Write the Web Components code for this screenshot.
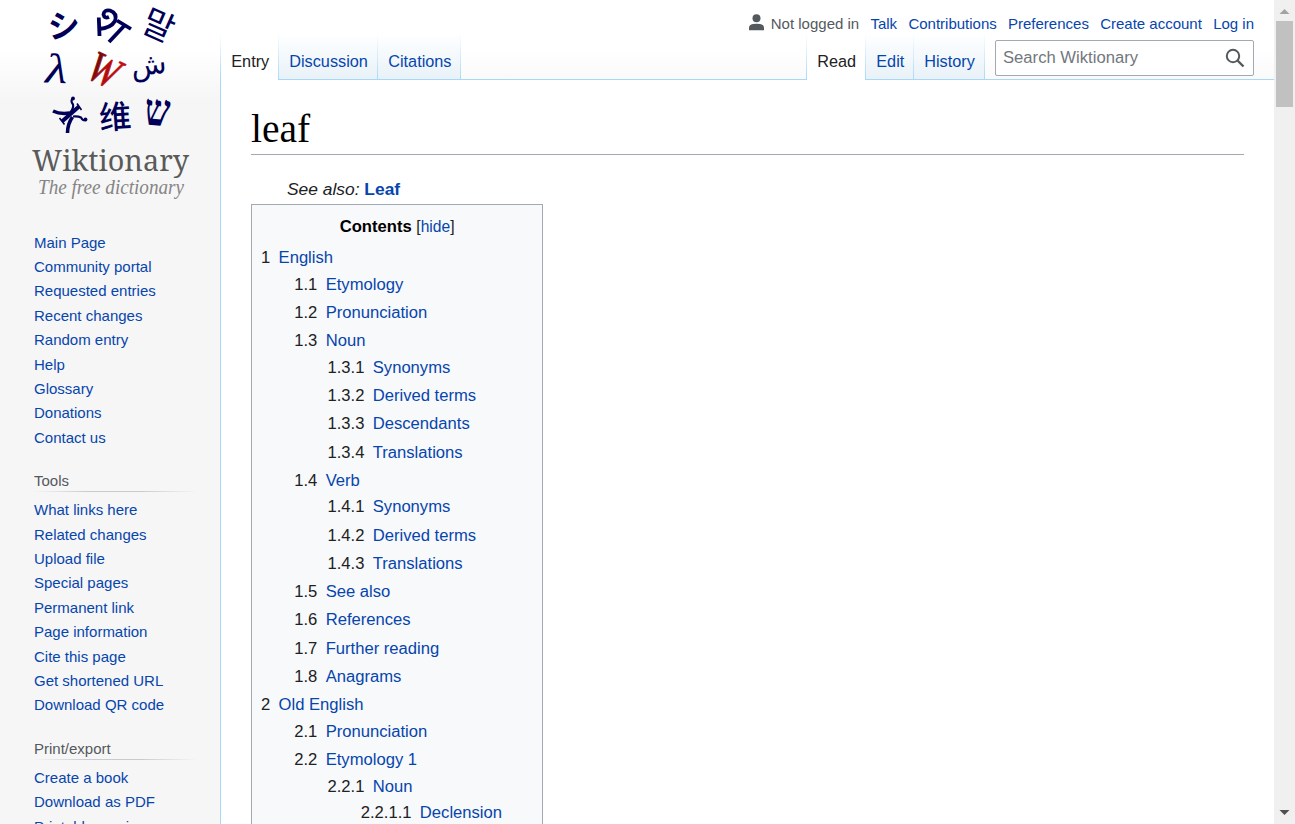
<!DOCTYPE html>
<html lang="en">
<head>
<meta charset="utf-8">
<title>leaf - Wiktionary</title>
<style>
html,body{margin:0;height:100%;overflow:hidden;background:#f6f6f6;font-family:"Liberation Sans",Arial,sans-serif;color:#202122}
</style>
</head>
<body>
<wiki-app></wiki-app>
<script>
function define(name, html, setup) {
  const t = document.createElement('template');
  t.innerHTML = html;
  customElements.define(name, class extends HTMLElement {
    constructor() {
      super();
      this.attachShadow({mode: 'open'}).append(t.content.cloneNode(true));
    }
    connectedCallback() { if (setup) setup(this, this.shadowRoot); }
  });
}

define('wiki-link', `<style>
:host{display:inline}
a{color:#0645ad;text-decoration:none}
</style><a href="#"><slot></slot></a>`);

define('wiki-logo', `<style>
:host{display:block;width:220px;height:200px}
svg{display:block}
.g text{text-anchor:middle}
</style>
<svg width="220" height="200" viewBox="0 0 220 200">
<defs><linearGradient id="red" x1="0" x2="1"><stop offset="0" stop-color="#5a0808"/><stop offset=".5" stop-color="#b00c0c"/><stop offset="1" stop-color="#c01010"/></linearGradient></defs>
<g class="g" fill="#000058">
<text font-family="Noto Sans CJK JP, sans-serif" font-weight="700" font-size="32" transform="translate(64.500 37.500) rotate(-3)">シ</text>
<g fill="none" stroke="#000058" stroke-width="3.800">
<path d="M98.800 17.500L99.500 36M99 29Q111 28 115 21Q117.500 13 110 10.500Q104 9.500 103.500 14.500Q104.500 19 109 17"/>
<path d="M117 20.500L131 29M124.500 25.500L109 42"/>
</g>
<text font-family="Noto Sans CJK KR, sans-serif" font-weight="400" font-size="34" transform="translate(153.500 36.500) rotate(24)">말</text>
<text font-family="Liberation Serif, serif" font-style="italic" font-size="42" transform="translate(56 83) rotate(2) scale(1.2 1)">λ</text>
<text font-family="Liberation Serif, serif" font-style="italic" font-size="38" fill="url(#red)" stroke="url(#red)" stroke-width=".8" transform="translate(98 83) rotate(25) scale(.94 1.15)">W</text>
<text font-family="DejaVu Sans, sans-serif" font-size="29" transform="translate(149.500 74.500) rotate(-6)">ش</text>
<g fill="none" stroke="#000058">
<path d="M53 111Q60 114.500 70 113" stroke-width="3.600"/>
<path d="M79 106.500L62 121.500" stroke-width="4"/>
<path d="M67.500 133Q67.500 124 72.500 117" stroke-width="3.600"/>
<path d="M70 113Q74 108 73 104.500Q70 100.500 73 98.500M73 116.500Q78 116 81 117.500Q83 121.500 86 119.500" stroke-width="2.200"/>
<path d="M77 103.500L81.500 110M59.500 118L64.500 124.500" stroke-width="1.600"/>
</g>
<circle cx="73" cy="98.500" r="1.900"/><circle cx="85.500" cy="119.500" r="1.900"/>
<text font-family="Noto Sans CJK SC, sans-serif" font-weight="500" font-size="32" transform="translate(116 128.500) rotate(-4)">维</text>
<text font-family="Liberation Serif, serif" font-weight="700" font-size="40" transform="translate(156.500 125.500) rotate(4) scale(.9 1.12)">ש</text>
</g>
<text x="32" y="171" font-family="Noto Serif, DejaVu Serif, serif" font-size="29" fill="#5a5a5a" textLength="157" lengthAdjust="spacingAndGlyphs">Wiktionary</text>
<text x="38" y="193.500" font-family="Liberation Serif, serif" font-style="italic" font-size="21" fill="#858585" textLength="146" lengthAdjust="spacingAndGlyphs">The free dictionary</text>
</svg>`);

define('side-portal', `<style>
:host{display:block;margin:0 14px 0 13px;padding:5px 0 3.500px}
h3{margin:0 10px 0 21px;font:400 15px/20px "Liberation Sans",Arial,sans-serif;color:#54595d;height:20px;border-bottom:1px solid;border-image:linear-gradient(to right,rgba(200,204,209,0),#c8ccd1 33%,#c8ccd1 66%,rgba(200,204,209,0)) 1}
ul{list-style:none;margin:0;padding:6.350px 0 0 21px}
li{font-size:15px;line-height:16.875px;padding:3.750px 0}
</style><h3></h3><ul></ul>`, (el, r) => {
  const h = el.getAttribute('heading');
  if (h) r.querySelector('h3').textContent = h; else r.querySelector('h3').remove();
  r.querySelector('ul').innerHTML = el.getAttribute('items').split('|').map(s => `<li><wiki-link>${s}</wiki-link></li>`).join('');
});

define('side-panel', `<style>
:host{display:block;width:220px;overflow:hidden}
.first{padding-top:24.650px}
.rest{margin-top:12.300px}
</style>
<wiki-logo></wiki-logo>
<side-portal class="first" items="Main Page|Community portal|Requested entries|Recent changes|Random entry|Help|Glossary|Donations|Contact us"></side-portal>
<side-portal class="rest" heading="Tools" items="What links here|Related changes|Upload file|Special pages|Permanent link|Page information|Cite this page|Get shortened URL|Download QR code"></side-portal>
<side-portal class="rest" heading="Print/export" items="Create a book|Download as PDF|Printable version"></side-portal>`);

define('personal-menu', `<style>
:host{display:flex;justify-content:flex-end;align-items:center;height:20px;padding:14px 20px 0 0;font-size:15px;line-height:20px;gap:11.250px;white-space:nowrap}
.me{display:flex;gap:5.500px;color:#54595d}
svg{display:block;margin-top:0}
</style>
<span class="me"><svg width="17" height="17" viewBox="0 0 17 17" fill="#54595d"><circle cx="8.500" cy="4.200" r="4"/><path d="M1 16.300v-2.300q0-3.600 4-4 3.500-.6 7 0 4 .4 4 4v2.300z"/></svg><span>Not logged in</span></span>
<wiki-link>Talk</wiki-link><wiki-link>Contributions</wiki-link><wiki-link>Preferences</wiki-link><wiki-link>Create account</wiki-link><wiki-link>Log in</wiki-link>`);

define('nav-tab', `<style>
:host{display:flex;align-items:flex-end;box-sizing:border-box;height:46px;width:var(--w);padding:0 0 8px 10.250px;font-size:16.250px;line-height:22px;white-space:nowrap;color:#0645ad;border-right:1px solid;border-image:linear-gradient(to bottom,#fff,#a7d7f9) 1;background:linear-gradient(to top,#a7d7f9 1px,#e8f2f8 1px,#fff 100%)}
:host([selected]){color:#202122;background:#fff}
</style><slot></slot>`);

define('search-box', `<style>
:host{display:flex;align-items:center;justify-content:space-between;box-sizing:border-box;width:259px;height:36px;border:1px solid #a2a9b1;border-radius:2px;background:#fff;padding:0 8px 1px 7px;font-size:16.650px;color:#72777d;margin:6px 20px 0 10px}
svg{display:block}
</style><span>Search Wiktionary</span>
<svg width="20" height="20" viewBox="0 0 20 20" fill="none" stroke="#54595d" stroke-width="2"><circle cx="8" cy="8" r="6.200"/><path d="M12.500 12.500l6 6" stroke-width="2.400"/></svg>`);

define('tab-bar', `<style>
:host{display:flex;height:46px;align-items:flex-start}
.grow{flex:1}
.edge{width:1px;height:46px;background:linear-gradient(#fff,#a7d7f9)}
</style>
<span class="edge"></span>
<nav-tab selected style="--w:58px">Entry</nav-tab><nav-tab style="--w:99px">Discussion</nav-tab><nav-tab style="--w:83px">Citations</nav-tab>
<span class="grow"></span><span class="edge"></span>
<nav-tab selected style="--w:59px">Read</nav-tab><nav-tab style="--w:48px">Edit</nav-tab><nav-tab style="--w:71px">History</nav-tab>
<search-box></search-box>`);

define('toc-list', `<style>
:host{display:block}
ul{list-style:none;margin:0;padding:0}
ul ul{margin-left:2em}
li{margin-bottom:.1em}
.row{display:flex;line-height:1.6}
.n{padding-right:.5em}
</style><ul></ul>`, (el, r) => {
  const data = [['English',[['Etymology'],['Pronunciation'],['Noun',[['Synonyms'],['Derived terms'],['Descendants'],['Translations']]],['Verb',[['Synonyms'],['Derived terms'],['Translations']]],['See also'],['References'],['Further reading'],['Anagrams']]],
    ['Old English',[['Pronunciation'],['Etymology 1',[['Noun',[['Declension']]]]]]]];
  const build = (items, p) => items.map(([t, kids], i) => {
    const n = p + (i + 1);
    return `<li><div class="row"><span class="n">${n}</span><wiki-link>${t}</wiki-link></div>${kids ? `<ul>${build(kids, n + '.')}</ul>` : ''}</li>`;
  }).join('');
  r.querySelector('ul').innerHTML = build(data, '');
});

define('toc-box', `<style>
:host{display:block;box-sizing:border-box;width:292px;min-height:640px;border:1px solid #a2a9b1;background:#f8f9fa;padding:8.750px 8.750px 8.750px 9px;font-size:16.625px}
.t{text-align:center;line-height:26.600px;margin-bottom:4.800px}
b{color:#000}
.t span{font-size:94%}
</style><div class="t"><b>Contents</b> <span>[<wiki-link>hide</wiki-link>]</span></div><toc-list></toc-list>`);

define('wiki-article', `<style>
:host{display:block;box-sizing:border-box;flex:1;background:#fff;border:1px solid #a7d7f9;border-width:0 0 0 1px;padding:25px 30px;overflow:hidden}
h1{margin:0;font:400 39.500px/49px "Liberation Serif",Georgia,serif;height:49px;border-bottom:1px solid #a2a9b1;color:#000}
.see{margin:21px 0 0 36px;font-size:17.400px;line-height:27px;height:28px}
</style>
<h1>leaf</h1>
<div class="see"><i>See also:</i> <b><wiki-link>Leaf</wiki-link></b></div>
<toc-box></toc-box>`);

define('scroll-rail', `<style>
:host{display:flex;flex-direction:column;align-items:center;width:21px;height:100%;background:#f0f0f0}
i{display:block;width:17px;height:86px;background:#c1c1c1;margin-top:0}
svg{display:block}
span{flex:1}
</style>
<svg width="21" height="21"><path d="M5.500 14l5-5 5 5z" fill="#a3a3a3"/></svg><i></i><span></span>
<svg width="21" height="21"><path d="M5.500 7l5 5 5-5z" fill="#505050"/></svg>`);

define('wiki-app', `<style>
:host{display:grid;grid-template-columns:220px 1fr 21px;width:100%;height:824px;overflow:hidden;background:linear-gradient(#fff 50px,#f6f6f6 100px)}
main{display:flex;flex-direction:column;min-width:0;min-height:0}
header{height:80px;box-sizing:border-box;background:linear-gradient(to top,#a7d7f9 1px,transparent 1px)}
</style>
<side-panel></side-panel>
<main><header><personal-menu></personal-menu><tab-bar></tab-bar></header><wiki-article></wiki-article></main>
<scroll-rail></scroll-rail>`);
</script>
</body>
</html>
